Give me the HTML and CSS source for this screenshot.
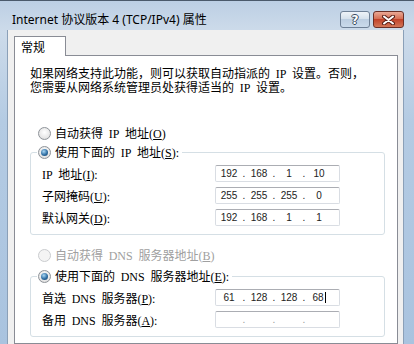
FILE: index.html
```html
<!DOCTYPE html>
<html>
<head>
    <meta charset="UTF-8">
    <meta name="viewport" content="width=device-width, initial-scale=1.0">
    <title>Internet 协议版本 4 (TCP/IPv4) 属性</title>
    <link rel="stylesheet" href="styles.css">
</head>
<body>
    <div class="window">
        <div class="titlebar">
            <span class="title">Internet 协议版本 4 (TCP/IPv4) 属性</span>
            <div class="caption-buttons">
                <span class="cap-btn help">?</span>
                <span class="cap-btn close">
                    <svg width="13" height="10" viewBox="0 0 13 10">
                        <path d="M2 1.5 L11 8.5 M11 1.5 L2 8.5" stroke="#5a2019" stroke-width="4" stroke-linecap="round"/>
                        <path d="M2 1.5 L11 8.5 M11 1.5 L2 8.5" stroke="#ffffff" stroke-width="2" stroke-linecap="round"/>
                    </svg>
                </span>
            </div>
        </div>

        <div class="client">
            <div class="tabs"><span class="tab">常规</span></div>
            <div class="panel">
                <p class="intro">如果网络支持此功能，则可以获取自动指派的 <span class="lat">IP</span> 设置。否则，</p>
                <p class="intro">您需要从网络系统管理员处获得适当的 <span class="lat">IP</span> 设置。</p>

                <div class="radio radio-auto-ip"><span class="mark"></span><span class="text">自动获得 <span class="lat">IP</span> 地址<span class="lat">(<u>O</u>)</span></span></div>
                <fieldset class="group">
                    <legend><span class="radio checked"><span class="mark"></span><span class="text">使用下面的 <span class="lat">IP</span> 地址<span class="lat">(<u>S</u>):</span></span></span></legend>
                    <div class="row">
                        <span class="label"><span class="lat">IP</span> 地址<span class="lat">(<u>I</u>):</span></span>
                        <div class="ip-box">
                            <span class="octet">192</span><span class="dot">.</span><span class="octet">168</span><span class="dot">.</span><span class="octet">1</span><span class="dot">.</span><span class="octet">10</span>
                        </div>
                    </div>
                    <div class="row">
                        <span class="label">子网掩码<span class="lat">(<u>U</u>):</span></span>
                        <div class="ip-box">
                            <span class="octet">255</span><span class="dot">.</span><span class="octet">255</span><span class="dot">.</span><span class="octet">255</span><span class="dot">.</span><span class="octet">0</span>
                        </div>
                    </div>
                    <div class="row">
                        <span class="label">默认网关<span class="lat">(<u>D</u>):</span></span>
                        <div class="ip-box">
                            <span class="octet">192</span><span class="dot">.</span><span class="octet">168</span><span class="dot">.</span><span class="octet">1</span><span class="dot">.</span><span class="octet">1</span>
                        </div>
                    </div>
                </fieldset>

                <div class="radio disabled radio-auto-dns"><span class="mark"></span><span class="text">自动获得 <span class="lat">DNS</span> 服务器地址<span class="lat">(<u>B</u>)</span></span></div>
                <fieldset class="group group-dns">
                    <legend><span class="radio checked"><span class="mark"></span><span class="text">使用下面的 <span class="lat">DNS</span> 服务器地址<span class="lat">(<u>E</u>):</span></span></span></legend>
                    <div class="row">
                        <span class="label">首选 <span class="lat">DNS</span> 服务器<span class="lat">(<u>P</u>):</span></span>
                        <div class="ip-box">
                            <span class="octet">61</span><span class="dot">.</span><span class="octet">128</span><span class="dot">.</span><span class="octet">128</span><span class="dot">.</span><span class="octet">68<span class="caret"></span></span>
                        </div>
                    </div>
                    <div class="row">
                        <span class="label">备用 <span class="lat">DNS</span> 服务器<span class="lat">(<u>A</u>):</span></span>
                        <div class="ip-box empty">
                            <span class="octet"></span><span class="dot">.</span><span class="octet"></span><span class="dot">.</span><span class="octet"></span><span class="dot">.</span><span class="octet"></span>
                        </div>
                    </div>
                </fieldset>
            </div>
        </div>
    </div>
</body>
</html>
```

FILE: styles.css
```css
body {
    margin: 0;
    font-family: "Noto Sans CJK SC", sans-serif;
    font-size: 12px;
    color: #000;
    background: #b9cde3;
    overflow: hidden;
}
.lat {
    font-family: "Liberation Serif", serif;
    font-size: 12px;
}

.window {
    height: 344px;
    box-sizing: border-box;
    display: flex;
    flex-direction: column;
    padding: 0 10px 0 7px;
    border-top: 1px solid #4b5a6b;
    background: linear-gradient(#bccfe4, #cddbea 30px, #b4cbe3 120px, #a9c3df);
}

/* заголовок окна */
.titlebar {
    height: 29px;
    box-sizing: border-box;
    padding-top: 10px;
    display: flex;
    align-items: flex-start;
}
.title {
    margin-left: 5px;
    line-height: 18px;
    font-family: "Noto Sans", "Noto Sans CJK SC", sans-serif;
    font-size: 12px;
    color: #000;
}
.caption-buttons {
    margin-left: auto;
    display: flex;
    gap: 3px;
}
.cap-btn {
    height: 17px;
    box-sizing: border-box;
    border-radius: 3px;
    display: flex;
    align-items: center;
    justify-content: center;
}
.help {
    width: 30px;
    border: 1px solid #6e8096;
    background: linear-gradient(#eef3f8, #d6e1ec 45%, #bccee1 50%, #cadaeb);
    font-family: "DejaVu Sans", sans-serif;
    font-weight: bold;
    font-size: 12px;
    color: #fff;
    text-shadow: 1px 0 0 #3a4a5e, -1px 0 0 #3a4a5e, 0 1px 0 #3a4a5e, 0 -1px 0 #3a4a5e;
}
.close {
    width: 31px;
    border: 1px solid #6b2f26;
    background: linear-gradient(#eaa996, #d66f55 45%, #c2432a 50%, #d27658);
}

/* клиентская часть */
.client {
    flex: 1;
    display: flex;
    flex-direction: column;
    background: #f0f0f0;
    border-left: 1px solid #8ba0b8;
    border-right: 1px solid #8ba0b8;
    padding: 6px 5px 0 6px;
}
.tabs {
    display: flex;
}
.tab {
    width: 52px;
    height: 20px;
    box-sizing: border-box;
    border: 1px solid #898c95;
    border-bottom: none;
    background: #fff;
    padding-left: 6px;
    line-height: 19px;
    margin-bottom: -1px;
    position: relative;
    z-index: 1;
}
.panel {
    flex: 1;
    border: 1px solid #898c95;
    background: #fff;
    padding: 10px 11px 0 15px;
    word-spacing: 3px;
}
.intro {
    margin: 0;
    height: 14px;
    line-height: 14px;
    white-space: pre;
}

/* радиокнопки */
.radio {
    display: flex;
    align-items: center;
    gap: 4px;
    height: 16px;
    line-height: 16px;
}
.radio .text {
    white-space: pre;
}
.radio-auto-ip {
    margin: 31px 0 0 8px;
}
.radio-auto-dns {
    margin: 12px 0 0 8px;
}
.mark {
    width: 13px;
    height: 13px;
    box-sizing: border-box;
    flex-shrink: 0;
    border-radius: 50%;
    border: 1px solid #8e9399;
    background: radial-gradient(circle at 50% 40%, #ffffff, #e6e6e6 65%, #cdcdcd);
    display: flex;
    align-items: center;
    justify-content: center;
}
.checked .mark::after {
    content: "";
    width: 7px;
    height: 7px;
    border-radius: 50%;
    background: radial-gradient(circle at 40% 35%, #a9d8f5, #2f6ea3 55%, #173e62);
}
.radio.disabled {
    color: #a0a0a0;
}
.disabled .mark {
    border-color: #cacccf;
    background: #f4f4f4;
}

/* группы */
.group {
    width: 355px;
    box-sizing: border-box;
    margin: 3px 0 0 0;
    padding: 0 0 8px 0;
    border: 1px solid #d5dfe5;
    border-radius: 3px;
}
.group-dns {
    margin-top: 5px;
}
.group legend {
    padding: 0 3px 0 1px;
    margin-left: 6px;
}
.row {
    display: flex;
    align-items: center;
    height: 17px;
    margin-top: 5px;
    padding-left: 11px;
}
.label {
    width: 173px;
    white-space: pre;
}
.ip-box {
    width: 125px;
    height: 17px;
    box-sizing: border-box;
    border: 1px solid #d9dde3;
    border-top-color: #abadb3;
    border-radius: 2px;
    display: flex;
    align-items: center;
    font-family: "Liberation Sans", sans-serif;
    font-size: 10px;
    word-spacing: 0;
    color: #222;
}
.octet {
    width: 26px;
    text-align: center;
}
.dot {
    width: 4px;
    text-align: center;
}
.ip-box.empty .dot {
    color: #9a9a9a;
}
.caret {
    display: inline-block;
    width: 1px;
    height: 11px;
    background: #000;
    vertical-align: -2px;
    margin-left: 1px;
}
```
